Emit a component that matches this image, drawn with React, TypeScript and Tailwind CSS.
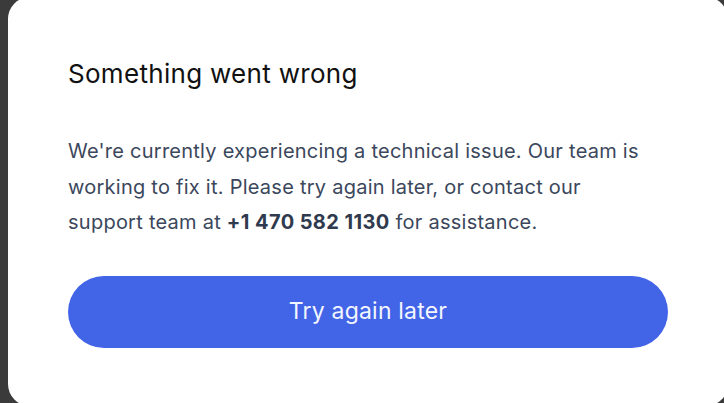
import React from "react";

export default function App() {
  return (
    <div className="w-[724px] h-[403px] overflow-hidden bg-[#3b3b3b]" style={{ fontFamily: "Inter, 'Noto Sans', sans-serif" }}>
      <div className="ml-[8px] mt-[-3px] w-[720px] h-[409px] bg-white rounded-[22px] px-[60px] pt-[61px]">
        <h1 className="text-[26px] leading-[32px] text-[#111111] font-normal tracking-[0.3px]">Something went wrong</h1>
        <p className="mt-[44px] w-[578px] text-[20px] leading-[35.5px] text-[#3b475c] tracking-[0.25px]">
          We're currently experiencing a technical issue. Our team is working to fix it. Please try again later, or contact our support team at <span className="font-bold tracking-[0.4px] text-[#2f3a4e]">+1 470 582 1130</span> for assistance.
        </p>
        <button className="mt-[35px] w-[600px] h-[72px] rounded-full bg-[#4264e6] text-[#f3f6ff] text-[23px] tracking-[0.2px]">
          Try again later
        </button>
      </div>
    </div>
  );
}
